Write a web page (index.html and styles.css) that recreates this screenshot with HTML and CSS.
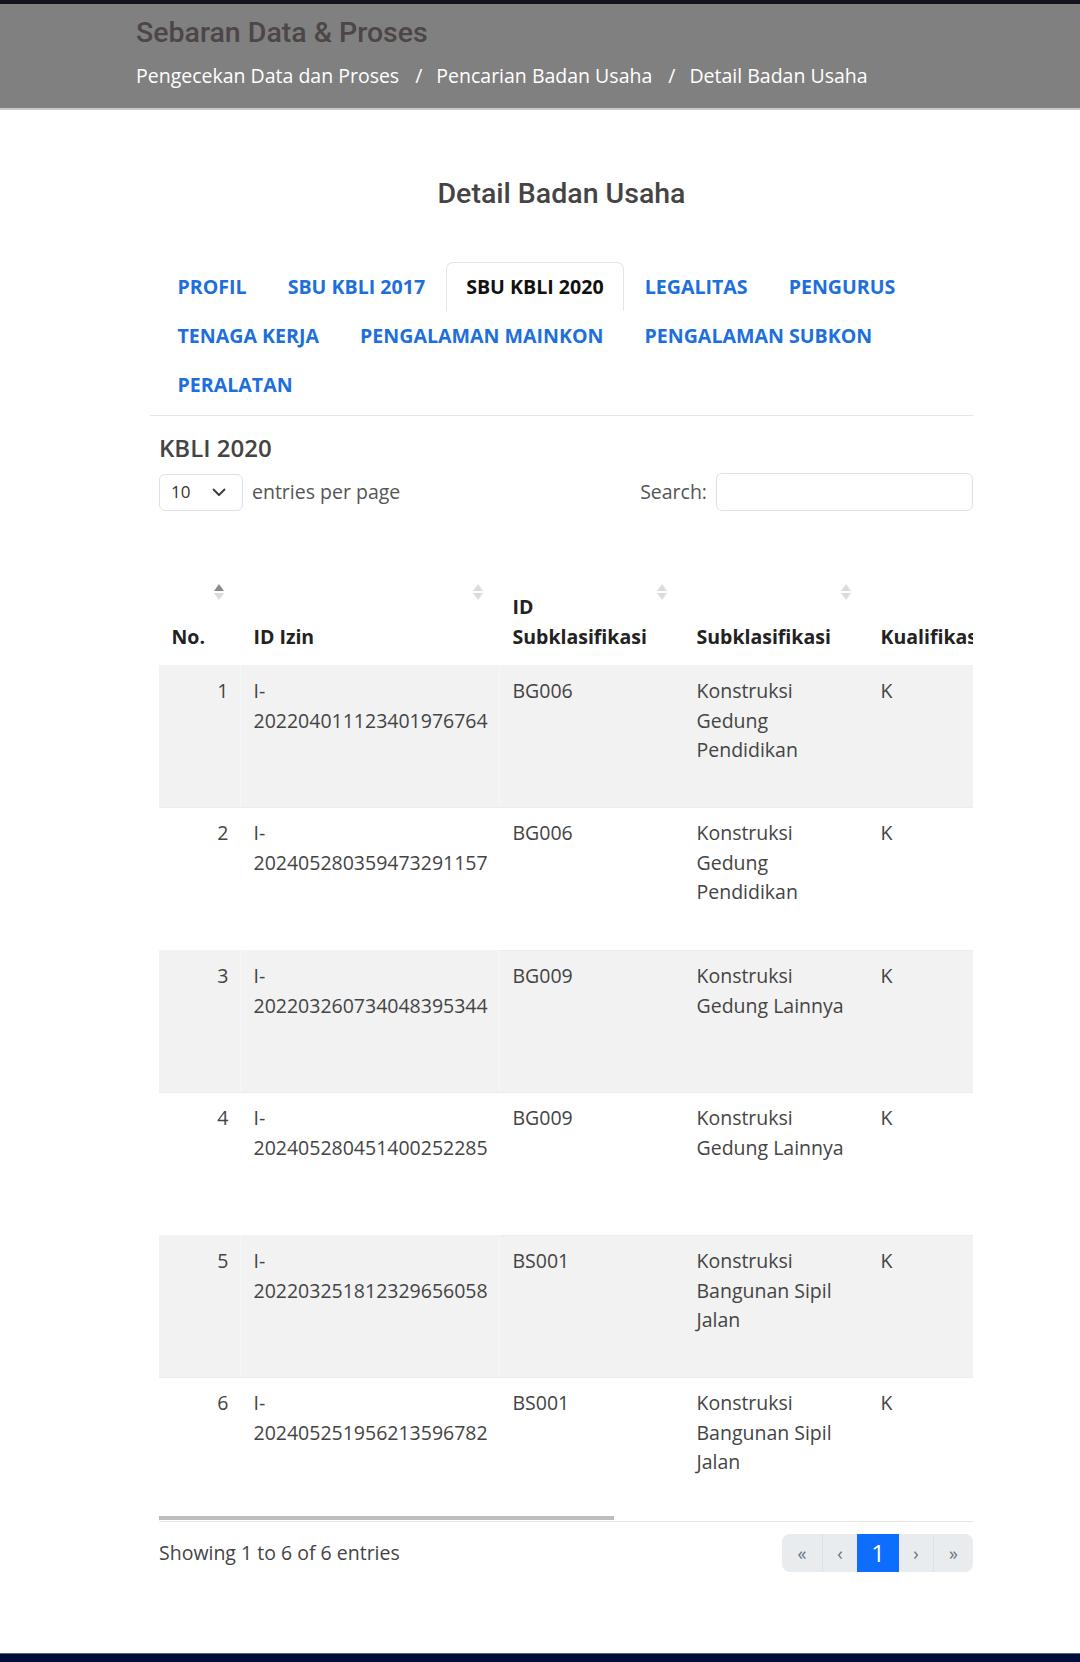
FILE: index.html
```html
<!DOCTYPE html>
<html lang="id">
<head>
<meta charset="utf-8">
<title>Detail Badan Usaha</title>
<link rel="stylesheet" href="styles.css">
</head>
<body>
<div class="topbar"></div>
<header class="pagehead">
  <div class="pagehead-inner">
    <h1 class="pagehead-title">Sebaran Data &amp; Proses</h1>
    <ol class="crumbs">
      <li class="crumb">Pengecekan Data dan Proses</li>
      <li class="crumb">Pencarian Badan Usaha</li>
      <li class="crumb">Detail Badan Usaha</li>
    </ol>
  </div>
</header>

<main class="main">
  <h2 class="page-title">Detail Badan Usaha</h2>

  <ul class="tabs">
    <li><a class="tab">PROFIL</a></li>
    <li><a class="tab">SBU KBLI 2017</a></li>
    <li><a class="tab tab-active">SBU KBLI 2020</a></li>
    <li><a class="tab">LEGALITAS</a></li>
    <li><a class="tab">PENGURUS</a></li>
    <li><a class="tab">TENAGA KERJA</a></li>
    <li><a class="tab">PENGALAMAN MAINKON</a></li>
    <li><a class="tab">PENGALAMAN SUBKON</a></li>
    <li><a class="tab">PERALATAN</a></li>
  </ul>

  <section class="panel">
    <h3 class="panel-title">KBLI 2020</h3>
    <div class="controls">
      <div class="length">
        <div class="select">
          <span>10</span>
          <svg class="chev" width="14" height="9" viewBox="0 0 14 9"><path d="M1.5 1.5 L7 7 L12.5 1.5" fill="none" stroke="#343a40" stroke-width="1.8" stroke-linecap="round" stroke-linejoin="round"/></svg>
        </div>
        <span class="length-label">entries per page</span>
      </div>
      <div class="search">
        <span class="search-label">Search:</span>
        <div class="search-input"></div>
      </div>
    </div>

    <div class="scroller">
      <table class="grid">
        <colgroup>
          <col class="c1"><col class="c2"><col class="c3"><col class="c4"><col class="c5">
        </colgroup>
        <thead>
          <tr>
            <th class="sorted">No.<span class="order"></span></th>
            <th>ID Izin<span class="order"></span></th>
            <th>ID<br>Subklasifikasi<span class="order"></span></th>
            <th>Subklasifikasi<span class="order"></span></th>
            <th>Kualifikasi<span class="order"></span></th>
          </tr>
        </thead>
        <tbody>
          <tr class="odd"><td class="num">1</td><td>I-<br>202204011123401976764</td><td>BG006</td><td>Konstruksi<br>Gedung<br>Pendidikan</td><td>K</td></tr>
          <tr><td class="num">2</td><td>I-<br>202405280359473291157</td><td>BG006</td><td>Konstruksi<br>Gedung<br>Pendidikan</td><td>K</td></tr>
          <tr class="odd"><td class="num">3</td><td>I-<br>202203260734048395344</td><td>BG009</td><td>Konstruksi<br>Gedung Lainnya</td><td>K</td></tr>
          <tr><td class="num">4</td><td>I-<br>202405280451400252285</td><td>BG009</td><td>Konstruksi<br>Gedung Lainnya</td><td>K</td></tr>
          <tr class="odd"><td class="num">5</td><td>I-<br>202203251812329656058</td><td>BS001</td><td>Konstruksi<br>Bangunan Sipil<br>Jalan</td><td>K</td></tr>
          <tr><td class="num">6</td><td>I-<br>202405251956213596782</td><td>BS001</td><td>Konstruksi<br>Bangunan Sipil<br>Jalan</td><td>K</td></tr>
        </tbody>
      </table>
    </div>
    <div class="hscroll"><div class="hscroll-thumb"></div></div>

    <div class="foot">
      <div class="info">Showing 1 to 6 of 6 entries</div>
      <nav class="pager">
        <span class="pg">«</span>
        <span class="pg pg-prev">‹</span>
        <span class="pg pg-active">1</span>
        <span class="pg pg-next">›</span>
        <span class="pg">»</span>
      </nav>
    </div>
  </section>
</main>

<footer class="sitefoot"></footer>
</body>
</html>
```

FILE: styles.css
```css
* { box-sizing: border-box; }
html, body { margin: 0; padding: 0; background: #fff; }
body {
  font-family: "Open Sans", "Liberation Sans", sans-serif;
  font-size: 19.5px;
  line-height: 30px;
  color: #444;
}

.topbar { height: 4px; background: #13141b; }

.pagehead {
  height: 106px;
  background: #808080;
  border-bottom: 2px solid #c9c9c9;
}
.pagehead-inner { padding: 12px 0 0 136px; }
.pagehead-title {
  margin: 0;
  font-family: Roboto, "Liberation Sans", sans-serif;
  font-weight: 500;
  font-size: 28.5px;
  line-height: 34px;
  color: #4c4646;
}
.crumbs {
  list-style: none;
  margin: 11px 0 0;
  padding: 0;
  display: flex;
  color: #fff;
  font-size: 19.5px;
  line-height: 30px;
}
.crumb + .crumb::before {
  content: "/";
  padding: 0 14px 0 16px;
}

.main {
  width: 823px;
  margin-left: 150px;
  padding-top: 67px;
}
.page-title {
  margin: 0;
  text-align: center;
  font-family: Roboto, "Liberation Sans", sans-serif;
  font-weight: 500;
  font-size: 28.5px;
  line-height: 34px;
  color: #464343;
}

.tabs {
  list-style: none;
  margin: 51px 0 0;
  padding: 0 0 6px 7px;
  display: flex;
  flex-wrap: wrap;
  border-bottom: 1px solid #e6e6e6;
}
.tab {
  display: block;
  padding: 9px 19.5px;
  line-height: 29px;
  font-size: 19.6px;
  font-weight: 700;
  color: #1d6fdb;
  border: 1px solid transparent;
  border-radius: 7px 7px 0 0;
}
.tab-active {
  color: #111;
  border-color: #e4e4e4 #e4e4e4 transparent;
  background: #fff;
}

.panel { padding-left: 9px; }
.panel-title {
  margin: 17px 0 0;
  font-size: 24px;
  line-height: 30px;
  font-weight: 600;
  color: #444;
}

.controls {
  margin-top: 10px;
  display: flex;
  justify-content: space-between;
  align-items: center;
}
.length { display: flex; align-items: center; gap: 9px; }
.select {
  width: 84px;
  height: 37px;
  border: 1px solid #dee2e6;
  border-radius: 6px;
  display: flex;
  align-items: center;
  justify-content: space-between;
  padding: 0 16px 0 11px;
  font-size: 17px;
  color: #333;
}
.length-label, .search-label { color: #555; }
.search { display: flex; align-items: center; gap: 9px; }
.search-input {
  width: 257px;
  height: 38px;
  border: 1px solid #dee2e6;
  border-radius: 6px;
}

.scroller {
  margin-top: 7px;
  overflow: hidden;
  width: 814px;
}
.grid {
  table-layout: fixed;
  border-collapse: collapse;
  width: 1456px;
}
.c1 { width: 82px; }
.c2 { width: 259px; }
.c3 { width: 184px; }
.c4 { width: 184px; }
.c5 { width: 747px; }

.grid th {
  position: relative;
  height: 147px;
  vertical-align: bottom;
  text-align: left;
  padding: 0 12.5px 13px;
  font-weight: 700;
  color: #222;
  line-height: 30px;
  white-space: nowrap;
}
.order {
  position: absolute;
  right: 17px;
  top: 65px;
  width: 10px;
  height: 18px;
}
.order::before, .order::after {
  content: "";
  position: absolute;
  left: 0;
  border-left: 5px solid transparent;
  border-right: 5px solid transparent;
}
.order::before { top: 1px; border-bottom: 7px solid #dcdcdc; }
.order::after { top: 10px; border-top: 7px solid #dcdcdc; }
.sorted .order::before { border-bottom-color: #8a8a8a; }

.grid td {
  height: 142px;
  vertical-align: top;
  padding: 11px 12.5px 10px;
  color: #444;
  line-height: 29.5px;
  box-shadow: inset 0 1px 0 #ececec;
}
.grid tbody tr:nth-child(even) td { height: 143px; }
.grid tbody tr:first-child td { box-shadow: none; }
.grid tr.odd td { background: #f2f2f2; }
.grid tr.odd td:nth-child(1),
.grid tr.odd td:nth-child(2) { box-shadow: inset -1px 0 0 #f7f7f7; }
.grid td.num { text-align: right; }

.hscroll {
  position: relative;
  margin-top: -4px;
  width: 814px;
  height: 6px;
  border-bottom: 1px solid #e6e6e6;
}
.hscroll-thumb { width: 455px; height: 4px; background: #bdbdbd; }

.foot {
  margin-top: 12px;
  width: 814px;
  display: flex;
  justify-content: space-between;
  align-items: center;
}
.info { color: #444; }
.pager {
  display: flex;
  height: 38px;
  border-radius: 8px;
  overflow: hidden;
  background: #e9ecef;
}
.pg {
  display: flex;
  align-items: center;
  justify-content: center;
  width: 40px;
  font-size: 18px;
  color: #6c757d;
  border-left: 1px solid #dde1e5;
}
.pg:first-child { border-left: 0; }
.pg-prev { width: 35px; }
.pg-next { width: 34px; }
.pg-active {
  width: 42px;
  background: #0d6efd;
  color: #fff;
  font-size: 24px;
  border-left: 0;
}
.pg-active + .pg { border-left: 0; }

.sitefoot {
  margin-top: 81px;
  height: 60px;
  background: #000c3c;
  border-top: 1px solid #5e6384;
}
```
